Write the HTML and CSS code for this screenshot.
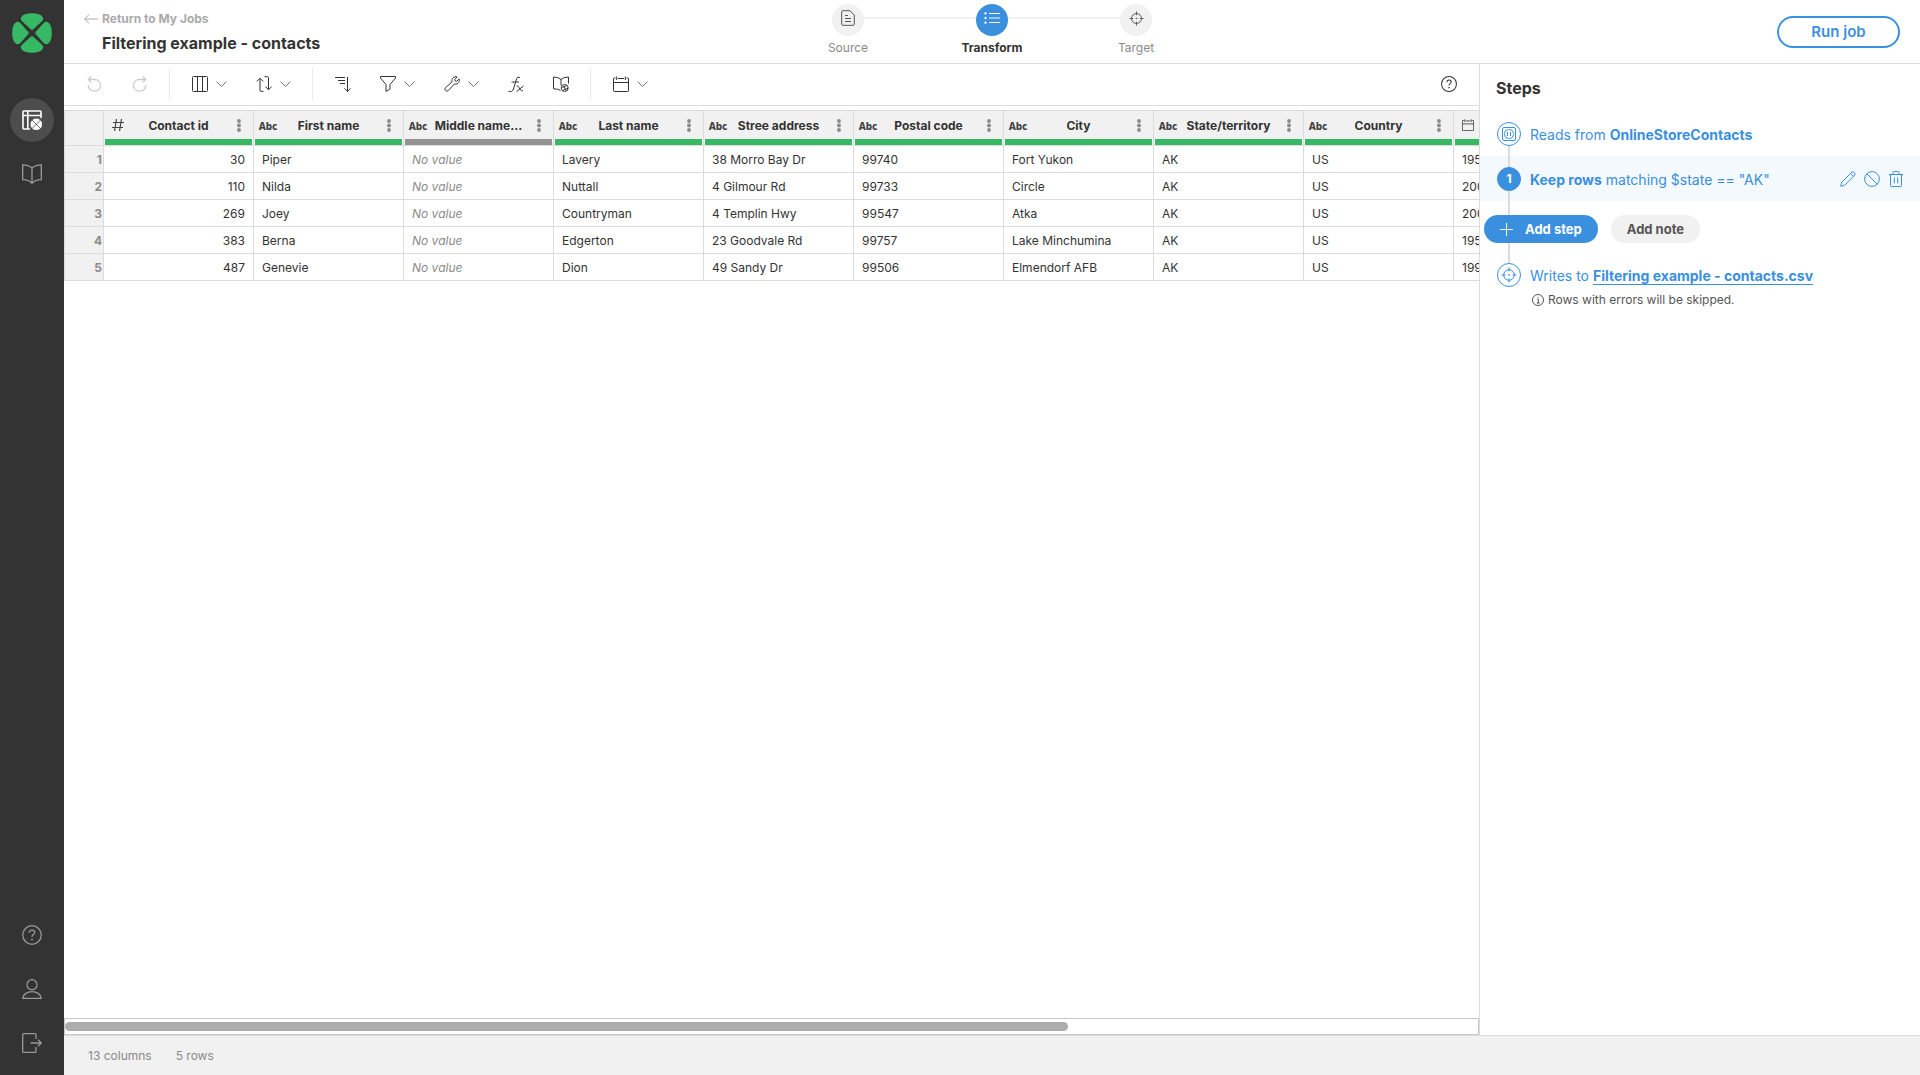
FILE: index.html
```html
<!DOCTYPE html>
<html lang="en">
<head>
<meta charset="utf-8">
<meta name="viewport" content="width=device-width, initial-scale=1">
<title>Filtering example - contacts</title>
<link rel="stylesheet" href="styles.css">
</head>
<body>
<svg class="sprite" aria-hidden="true">
  <symbol id="i-chevron" viewBox="0 0 11 16"><path d="M.5 5.500l5 5 5-5"/></symbol>
  <symbol id="i-help" viewBox="0 0 20 20"><circle cx="10" cy="10" r="9.300"/><path d="M7.300 7.700c0-1.600 1.100-2.600 2.700-2.600s2.700 1 2.700 2.400c0 2-2.700 2.100-2.700 4.300"/><path d="M10 13.700v1.600" stroke-width="1.700"/></symbol>
  <symbol id="i-calendar" viewBox="0 0 16 16"><path d="M2.500 2H1.200q-.7 0-.7.700v12q0 .8.800.8h13.400q.8 0 .8-.8v-12q0-.7-.7-.7h-1.300M5 2.500h6M.5 6.500h15M3.700.5v3.500M12.300.5v3.500"/></symbol>
  <symbol id="i-target" viewBox="0 0 16 16"><circle cx="8" cy="8" r="5.300"/><path d="M8 .5v4M8 11.500v4M.5 8h4M11.500 8h4"/><circle cx="8" cy="8" r=".5"/></symbol>
  <symbol id="i-dots" viewBox="0 0 4 13"><circle cx="2" cy="2" r="1.900"/><circle cx="2" cy="6.500" r="1.900"/><circle cx="2" cy="11" r="1.900"/></symbol>
</svg>
<div class="app">
  <aside class="sidebar">
    <a class="logo" href="#" aria-label="Home">
      <svg viewBox="0 0 40 40" width="40" height="40"><g fill="#36b864">
        <path id="leaf" d="M18.700 16.200L10 8.300Q7.500 5.800 10 3.200C13-.8 27-.8 30 3.200Q32.500 5.800 30 8.300L21.300 16.200Q20 17.400 18.700 16.200Z"/>
        <use href="#leaf" transform="rotate(90 20 20)"/><use href="#leaf" transform="rotate(180 20 20)"/><use href="#leaf" transform="rotate(270 20 20)"/>
      </g></svg>
    </a>
    <nav class="nav" aria-label="Main">
      <a class="nav-item active" href="#" aria-label="Jobs">
        <svg viewBox="0 0 20 20" width="20" height="20"><path d="M8 19H2Q1 19 1 18V2Q1 1 2 1H18Q19 1 19 2V8M1 5.500H19M5.800 1V19" stroke-width="1.600"/><g fill="#fff" stroke="#4d4d4d" stroke-width=".8"><circle cx="14.300" cy="14.300" r="6.200"/><path d="M10 10l8.600 8.600M18.600 10L10 18.600"/></g></svg>
      </a>
      <a class="nav-item" href="#" aria-label="Library">
        <svg viewBox="0 0 20 20" width="20" height="20"><path d="M10 4.200C7.500 1.500 4 .9.700.9V15.600C4 15.600 7.500 16.300 10 19.300C12.500 16.300 16 15.600 19.300 15.600V.9C16 .9 12.500 1.500 10 4.200V19"/></svg>
      </a>
    </nav>
    <nav class="nav nav-bottom" aria-label="Account">
      <a class="nav-item" href="#" aria-label="Help"><svg width="20" height="20"><use href="#i-help"/></svg></a>
      <a class="nav-item" href="#" aria-label="Profile">
        <svg viewBox="0 0 20 20" width="20" height="20"><circle cx="10" cy="5.700" r="5"/><path d="M.8 19.300C1.500 10.500 18.500 10.500 19.200 19.300Z"/></svg>
      </a>
      <a class="nav-item" href="#" aria-label="Sign out">
        <svg viewBox="0 0 20 20" width="20" height="20"><path d="M14 6V1.600Q14 .7 13 .7H1.600Q.7.700.7 1.600V18.400Q.7 19.300 1.600 19.300H13Q14 19.300 14 18.400V14M8.500 10H19.300M16 6.700L19.300 10L16 13.300"/></svg>
      </a>
    </nav>
  </aside>

  <div class="main">
    <header class="header">
      <div class="heading">
        <a class="back" href="#"><svg viewBox="0 0 14 12" width="14" height="12"><path d="M14 6H.700M5 1.500L.7 6L5 10.500"/></svg>Return to My Jobs</a>
        <h1 class="title">Filtering example - contacts</h1>
      </div>
      <ol class="stepper">
        <li class="stage"><span class="stage-icon"><svg viewBox="0 0 14 16" width="14" height="16"><path d="M1.700.700H9L13.300 5V14.300Q13.300 15.300 12.300 15.300H1.700Q.7 15.300.7 14.300V1.700Q.7.700 1.700.7ZM4 5.500H7M4 8.500H10M4 11.500H10"/></svg></span><span>Source</span></li>
        <li class="stage current"><span class="stage-icon"><svg viewBox="0 0 16 14" width="16" height="14"><path d="M5 2.500H16M5 7H16M5 11.500H16"/><g fill="#fff"><circle cx="1.500" cy="2.300" r=".8"/><circle cx="1.500" cy="7" r=".8"/><circle cx="1.500" cy="11.700" r=".8"/></g></svg></span><span>Transform</span></li>
        <li class="stage"><span class="stage-icon"><svg width="15" height="15"><use href="#i-target"/></svg></span><span>Target</span></li>
      </ol>
      <button class="run" type="button">Run job</button>
    </header>

    <div class="workspace">
      <section class="editor">
        <div class="toolbar" role="toolbar" aria-label="Transform tools">
          <button class="tool" disabled aria-label="Undo"><svg viewBox="0 0 16 16" width="16" height="16"><path d="M1.300 3.500H7.500C15.500 3.500 15.500 15.200 7.500 15.200Q1.500 15 1.200 9M4.300.500L1.300 3.500L4.300 6.500"/></svg></button>
          <button class="tool" disabled aria-label="Redo"><svg viewBox="0 0 16 16" width="16" height="16"><path d="M13.700 3.500H7.500C-.5 3.500-.5 15.200 7.500 15.200Q13.500 15 13.800 9M10.700.500L13.700 3.500L10.700 6.500"/></svg></button>
          <span class="divider"></span>
          <button class="tool" aria-label="Columns"><svg viewBox="0 0 16 16" width="16" height="16"><path d="M1.500.5H14.500Q15.500.5 15.500 1.500V14.500Q15.500 15.500 14.500 15.500H1.500Q.5 15.500.5 14.500V1.500Q.5.500 1.500.5ZM5.500.500V15.500M10.500.5V15.500"/></svg><svg class="chevron" width="11" height="16"><use href="#i-chevron"/></svg></button>
          <button class="tool" aria-label="Reorder"><svg viewBox="0 0 16 16" width="16" height="16"><path d="M7.500 15.300H5Q4 15.300 4 14.300V2.500M.8 5.500L4 2.200L7.200 5.500M8.500.700H11.500Q12.500.7 12.500 1.700V13.500M9.300 10.500L12.500 13.800L15.700 10.500"/></svg><svg class="chevron" width="11" height="16"><use href="#i-chevron"/></svg></button>
          <span class="divider"></span>
          <button class="tool" aria-label="Sort"><svg viewBox="0 0 16 16" width="16" height="16"><path d="M0 1.500H10M3 4.500H10M5 7.500H10M12.500 1V15.500M9.500 12.300L12.500 15.500L15.500 12.300"/></svg></button>
          <button class="tool" aria-label="Filter"><svg viewBox="0 0 16 16" width="16" height="16"><path d="M.5.500H15.500V2L10 8.500V13L6 15.500V8.500L.5 2Z"/></svg><svg class="chevron" width="11" height="16"><use href="#i-chevron"/></svg></button>
          <button class="tool" aria-label="Repair"><svg viewBox="0 0 16 16" width="16" height="16"><path d="M13.200 1L10.800 3.400L11.200 5L12.700 5.300L15.100 2.900C16 5.300 14.500 8.600 10.300 8.100L4.200 14.600C2.500 16.300-.3 13.500 1.400 11.800L8 5.900C7.300 2.300 10 0 13.200 1ZM2.700 13.200H2.900"/></svg><svg class="chevron" width="11" height="16"><use href="#i-chevron"/></svg></button>
          <button class="tool" aria-label="Formula"><svg viewBox="0 0 16 16" width="16" height="16"><path d="M12 1.500Q9.500-.2 8.500 3L5.500 13Q4.500 16.500.5 15.300M3.500 6H11M8.700 10Q10 9.500 11 11.500L12.500 14Q13.500 15.500 15 14.500M15.500 10L8.500 15.500"/></svg></button>
          <button class="tool" aria-label="Lookup"><svg viewBox="0 0 16 16" width="16" height="16"><path d="M7.500 14.500Q5 12.800.5 12.800V1Q5.500 1 8 3.500Q10.500 1 15.500 1V7.500M8 3.500V9.500"/><circle cx="11.700" cy="12" r="3.500"/><path d="M9.300 11.500L13.500 9.500M10 14.300L15 12.300M10.500 10L13 14.300"/></svg></button>
          <span class="divider"></span>
          <button class="tool" aria-label="Dates"><svg width="16" height="16"><use href="#i-calendar"/></svg><svg class="chevron" width="11" height="16"><use href="#i-chevron"/></svg></button>
          <button class="tool tool-help" aria-label="Help"><svg width="16" height="16"><use href="#i-help"/></svg></button>
        </div>

        <div class="grid-view">
          <table class="grid">
            <colgroup><col class="col-index"><col span="10" class="col-data"></colgroup>
            <thead>
              <tr>
                <td class="corner"></td>
                <th scope="col"><div class="column-head"><svg class="type-icon" viewBox="0 0 12 12" width="12" height="12"><path d="M4.500 0L2.500 12M9.500 0L7.500 12M1 3.500H12M0 8.500H11"/></svg><span class="column-name">Contact id</span><button class="menu" aria-label="Contact id menu"><svg width="4" height="13"><use href="#i-dots"/></svg></button></div><div class="quality"></div></th>
                <th scope="col"><div class="column-head"><span class="type">Abc</span><span class="column-name">First name</span><button class="menu" aria-label="First name menu"><svg width="4" height="13"><use href="#i-dots"/></svg></button></div><div class="quality"></div></th>
                <th scope="col"><div class="column-head"><span class="type">Abc</span><span class="column-name">Middle name…</span><button class="menu" aria-label="Middle name menu"><svg width="4" height="13"><use href="#i-dots"/></svg></button></div><div class="quality empty"></div></th>
                <th scope="col"><div class="column-head"><span class="type">Abc</span><span class="column-name">Last name</span><button class="menu" aria-label="Last name menu"><svg width="4" height="13"><use href="#i-dots"/></svg></button></div><div class="quality"></div></th>
                <th scope="col"><div class="column-head"><span class="type">Abc</span><span class="column-name">Stree address</span><button class="menu" aria-label="Stree address menu"><svg width="4" height="13"><use href="#i-dots"/></svg></button></div><div class="quality"></div></th>
                <th scope="col"><div class="column-head"><span class="type">Abc</span><span class="column-name">Postal code</span><button class="menu" aria-label="Postal code menu"><svg width="4" height="13"><use href="#i-dots"/></svg></button></div><div class="quality"></div></th>
                <th scope="col"><div class="column-head"><span class="type">Abc</span><span class="column-name">City</span><button class="menu" aria-label="City menu"><svg width="4" height="13"><use href="#i-dots"/></svg></button></div><div class="quality"></div></th>
                <th scope="col"><div class="column-head"><span class="type">Abc</span><span class="column-name">State/territory</span><button class="menu" aria-label="State/territory menu"><svg width="4" height="13"><use href="#i-dots"/></svg></button></div><div class="quality"></div></th>
                <th scope="col"><div class="column-head"><span class="type">Abc</span><span class="column-name">Country</span><button class="menu" aria-label="Country menu"><svg width="4" height="13"><use href="#i-dots"/></svg></button></div><div class="quality"></div></th>
                <th scope="col"><div class="column-head"><svg class="type-icon" width="12" height="12"><use href="#i-calendar"/></svg></div><div class="quality"></div></th>
              </tr>
            </thead>
            <tbody>
              <tr><th scope="row">1</th><td class="number">30</td><td>Piper</td><td class="missing">No value</td><td>Lavery</td><td>38 Morro Bay Dr</td><td>99740</td><td>Fort Yukon</td><td>AK</td><td>US</td><td>195</td></tr>
              <tr><th scope="row">2</th><td class="number">110</td><td>Nilda</td><td class="missing">No value</td><td>Nuttall</td><td>4 Gilmour Rd</td><td>99733</td><td>Circle</td><td>AK</td><td>US</td><td>200</td></tr>
              <tr><th scope="row">3</th><td class="number">269</td><td>Joey</td><td class="missing">No value</td><td>Countryman</td><td>4 Templin Hwy</td><td>99547</td><td>Atka</td><td>AK</td><td>US</td><td>200</td></tr>
              <tr><th scope="row">4</th><td class="number">383</td><td>Berna</td><td class="missing">No value</td><td>Edgerton</td><td>23 Goodvale Rd</td><td>99757</td><td>Lake Minchumina</td><td>AK</td><td>US</td><td>195</td></tr>
              <tr><th scope="row">5</th><td class="number">487</td><td>Genevie</td><td class="missing">No value</td><td>Dion</td><td>49 Sandy Dr</td><td>99506</td><td>Elmendorf AFB</td><td>AK</td><td>US</td><td>199</td></tr>
            </tbody>
          </table>
        </div>
        <div class="scroll-track"><div class="scroll-thumb"></div></div>
      </section>

      <aside class="steps">
        <h2 class="steps-title">Steps</h2>
        <ol class="step-list">
          <li class="step">
            <span class="marker"><svg viewBox="0 0 16 16" width="16" height="16"><rect x="1.500" y="1.500" width="13" height="13" rx="1.500"/><rect x="3.500" y="3.500" width="9" height="9" rx="4"/><path d="M6.500 6V10M9.500 6V10"/></svg></span>
            <p class="step-text">Reads from <a href="#">OnlineStoreContacts</a></p>
          </li>
          <li class="step selected">
            <span class="marker filled">1</span>
            <p class="step-text"><b>Keep rows</b> matching $state == "AK"</p>
            <div class="actions">
              <button aria-label="Edit step"><svg viewBox="0 0 16 16" width="16" height="16"><path d="M.700 15.300L1.800 11.200L12 1Q13 .2 14.200 1.500Q15.700 2.900 14.800 4L4.700 14.200ZM10.500 2.500L13.300 5.300"/></svg></button>
              <button aria-label="Disable step"><svg viewBox="0 0 16 16" width="16" height="16"><circle cx="8" cy="8" r="7.400"/><path d="M2.800 2.800L13.200 13.200"/></svg></button>
              <button aria-label="Delete step"><svg viewBox="0 0 16 16" width="16" height="16"><path d="M1 3.500H15M2.500 3.500V14.500Q2.500 15.500 3.500 15.500H12.500Q13.500 15.500 13.500 14.500V3.500M5 3.500V1.500Q5 .500 6 .5H10Q11 .5 11 1.500V3.500M6.300 6.500V12.500M9.700 6.500V12.500"/></svg></button>
            </div>
          </li>
          <li class="add-row">
            <button class="add-step" type="button"><svg viewBox="0 0 13 13" width="13" height="13"><path d="M6.500 0V13M0 6.500H13"/></svg>Add step</button>
            <button class="add-note" type="button">Add note</button>
          </li>
          <li class="step">
            <span class="marker"><svg width="16" height="16"><use href="#i-target"/></svg></span>
            <p class="step-text">Writes to <a class="underlined" href="#">Filtering example - contacts.csv</a></p>
          </li>
        </ol>
        <p class="hint"><svg viewBox="0 0 12 12" width="12" height="12"><circle cx="6" cy="6" r="5.500"/><path d="M5 5.200H6.300V9M4.700 9H7.700M6 2.800V3.700"/></svg>Rows with errors will be skipped.</p>
      </aside>
    </div>

    <footer class="status"><span>13 columns</span><span>5 rows</span></footer>
  </div>
</div>
</body>
</html>
```
FILE: styles.css
```css
:root {
  --blue: #3a8fde;
  --green: #36b864;
  --line: #dcdcdc;
  --panel: #f1f1f1;
  --text: #333;
  --muted: #8a8a8a;
}

* { box-sizing: border-box; }

body {
  margin: 0;
  font: 12px/16px Inter, "Liberation Sans", sans-serif;
  color: var(--text);
  background: #fff;
}

h1, h2, p, ol { margin: 0; padding: 0; }
ol { list-style: none; }
a { color: inherit; text-decoration: none; }

button {
  padding: 0;
  border: 0;
  background: none;
  font: inherit;
  color: inherit;
  cursor: pointer;
}

svg {
  display: block;
  flex: none;
  fill: none;
  stroke: currentColor;
}

.sprite { position: absolute; width: 0; height: 0; }

.app { display: flex; min-height: 100vh; }

/* Sidebar */
.sidebar {
  display: flex;
  flex-direction: column;
  align-items: center;
  width: 64px;
  padding: 13px 0 10px;
  background: #333;
}
.logo { margin-bottom: 45px; }
.logo svg { stroke: none; }
.nav { display: flex; flex-direction: column; gap: 10px; }
.nav-bottom { margin-top: auto; }
.nav-item {
  display: grid;
  place-items: center;
  width: 44px;
  height: 44px;
  border-radius: 50%;
  color: #999;
}
.nav-item svg { stroke-width: 1.3; }
.nav-item.active { background: #4d4d4d; color: #fff; }

.main { flex: 1; min-width: 0; display: flex; flex-direction: column; }

/* Header */
.header {
  display: grid;
  grid-template-columns: 1fr auto 1fr;
  height: 64px;
  border-bottom: 1px solid var(--line);
}
.heading { padding: 11px 0 0 20px; }
.back {
  display: flex;
  align-items: center;
  gap: 4px;
  color: #aaa;
  font-weight: 700;
}
.title { padding: 6px 0 0 18px; font-size: 16px; line-height: 20px; font-weight: 700; }

.stepper { display: flex; padding-top: 4px; }
.stage {
  position: relative;
  display: flex;
  flex-direction: column;
  align-items: center;
  gap: 4px;
  width: 144px;
  color: var(--muted);
}
.stage + .stage::before {
  content: "";
  position: absolute;
  top: 13px;
  right: 88px;
  width: 112px;
  height: 2px;
  background: var(--panel);
}
.stage-icon {
  display: flex;
  justify-content: center;
  align-items: center;
  width: 32px;
  height: 32px;
  padding-bottom: 4px;
  border-radius: 50%;
  background: var(--panel);
  color: #555;
}
.current { color: var(--text); font-weight: 700; }
.current .stage-icon { background: var(--blue); color: #fff; }

.run {
  justify-self: end;
  align-self: center;
  width: 123px;
  height: 32px;
  margin-right: 20px;
  border: 2px solid var(--blue);
  border-radius: 16px;
  color: var(--blue);
  font-size: 15px;
  font-weight: 600;
}

.workspace { flex: 1; display: flex; min-height: 0; }
.editor { flex: 1; min-width: 0; display: flex; flex-direction: column; }

/* Toolbar */
.toolbar {
  display: flex;
  align-items: center;
  gap: 1px;
  height: 42px;
  padding: 0 8px 1px 9px;
  border-bottom: 1px solid var(--line);
}
.tool { display: flex; align-items: center; gap: 8px; height: 32px; padding: 0 14px; }
.tool:disabled { color: #ccc; stroke-width: 1.3; }
.tool-help { margin-left: auto; stroke-width: 1.3; }
.chevron { color: #777; }
.divider { width: 1px; height: 32px; margin: 0 7px 0 6px; background: #eaeaea; }

/* Data grid */
.grid-view { flex: 1; padding-top: 4px; overflow: hidden; }
.grid {
  width: 1540px;
  table-layout: fixed;
  border-spacing: 0;
  border-top: 1px solid var(--line);
}
.col-index { width: 40px; }
.col-data { width: 150px; }
.grid th, .grid td {
  height: 27px;
  padding: 2px 8px 0;
  border-right: 1px solid var(--line);
  border-bottom: 1px solid var(--line);
  text-align: left;
  white-space: nowrap;
}
.grid thead th, .grid .corner { height: 35px; padding: 0; background: var(--panel); }
.grid .corner, .grid tbody th { border-left: 1px solid var(--line); }
.grid tbody th {
  padding: 2px 1px 0;
  background: var(--panel);
  color: var(--muted);
  font-weight: 700;
  text-align: right;
}
.grid .number { text-align: right; }
.grid .missing { color: var(--muted); font-style: italic; }

.column-head {
  display: grid;
  grid-template-columns: 28px 1fr 28px;
  align-items: center;
  height: 28px;
}
.column-name {
  padding-top: 2px;
  overflow: hidden;
  text-align: center;
  text-overflow: ellipsis;
  font-weight: 700;
}
.type {
  padding-top: 2px;
  color: #444;
  font-family: "Noto Sans", sans-serif;
  font-size: 10px;
  font-weight: 800;
  text-align: center;
}
.type-icon { justify-self: center; color: #444; stroke-width: 1.2; }
.menu { display: grid; place-items: center; height: 24px; }
.menu svg { fill: #888; stroke: none; }
.quality { height: 6px; margin: 0 1px; background: var(--green); }
.quality.empty { background: #939393; }

.scroll-track {
  height: 17px;
  padding: 3px 0;
  border: 1px solid #c8c8c8;
}
.scroll-thumb { width: 71%; height: 9px; border-radius: 5px; background: #adadad; }

/* Steps panel */
.steps { width: 441px; border-left: 1px solid var(--line); }
.steps-title { padding: 14px 16px; font-size: 16px; line-height: 20px; font-weight: 700; }
.step-list { position: relative; }
.step-list::before {
  content: "";
  position: absolute;
  top: 22px;
  bottom: 22px;
  left: 28px;
  width: 2px;
  background: var(--line);
}
.step {
  display: flex;
  align-items: center;
  gap: 9px;
  height: 44px;
  padding: 0 16px 0 17px;
  color: var(--blue);
}
.step.selected { height: 45px; background: #f4f9fd; }
.marker {
  position: relative;
  display: grid;
  place-items: center;
  width: 24px;
  height: 24px;
  border: 1px solid var(--blue);
  border-radius: 50%;
  background: #fff;
}
.marker.filled { background: var(--blue); color: #fff; font-weight: 700; }
.step-text { padding-top: 2px; font-size: 14px; line-height: 20px; }
.step-text a, .step-text b { font-weight: 700; }
.step-text .underlined { text-decoration: underline; text-underline-offset: 3px; }
.actions { display: flex; gap: 8px; margin-left: auto; }
.add-row { display: flex; gap: 13px; padding: 14px 4px 10px; }
.add-step, .add-note {
  position: relative;
  display: flex;
  align-items: center;
  height: 28px;
  padding: 0 16px;
  border-radius: 14px;
  font-size: 13px;
  font-weight: 700;
}
.add-step { gap: 12px; background: var(--blue); color: #fff; }
.add-note { background: var(--panel); color: #555; }
.hint {
  display: flex;
  align-items: center;
  gap: 4px;
  padding-left: 52px;
  margin-top: -5px;
  color: #555;
}

.status {
  display: flex;
  gap: 24px;
  height: 40px;
  padding: 12px 24px;
  border-top: 1px solid var(--line);
  background: var(--panel);
  color: var(--muted);
}
```
